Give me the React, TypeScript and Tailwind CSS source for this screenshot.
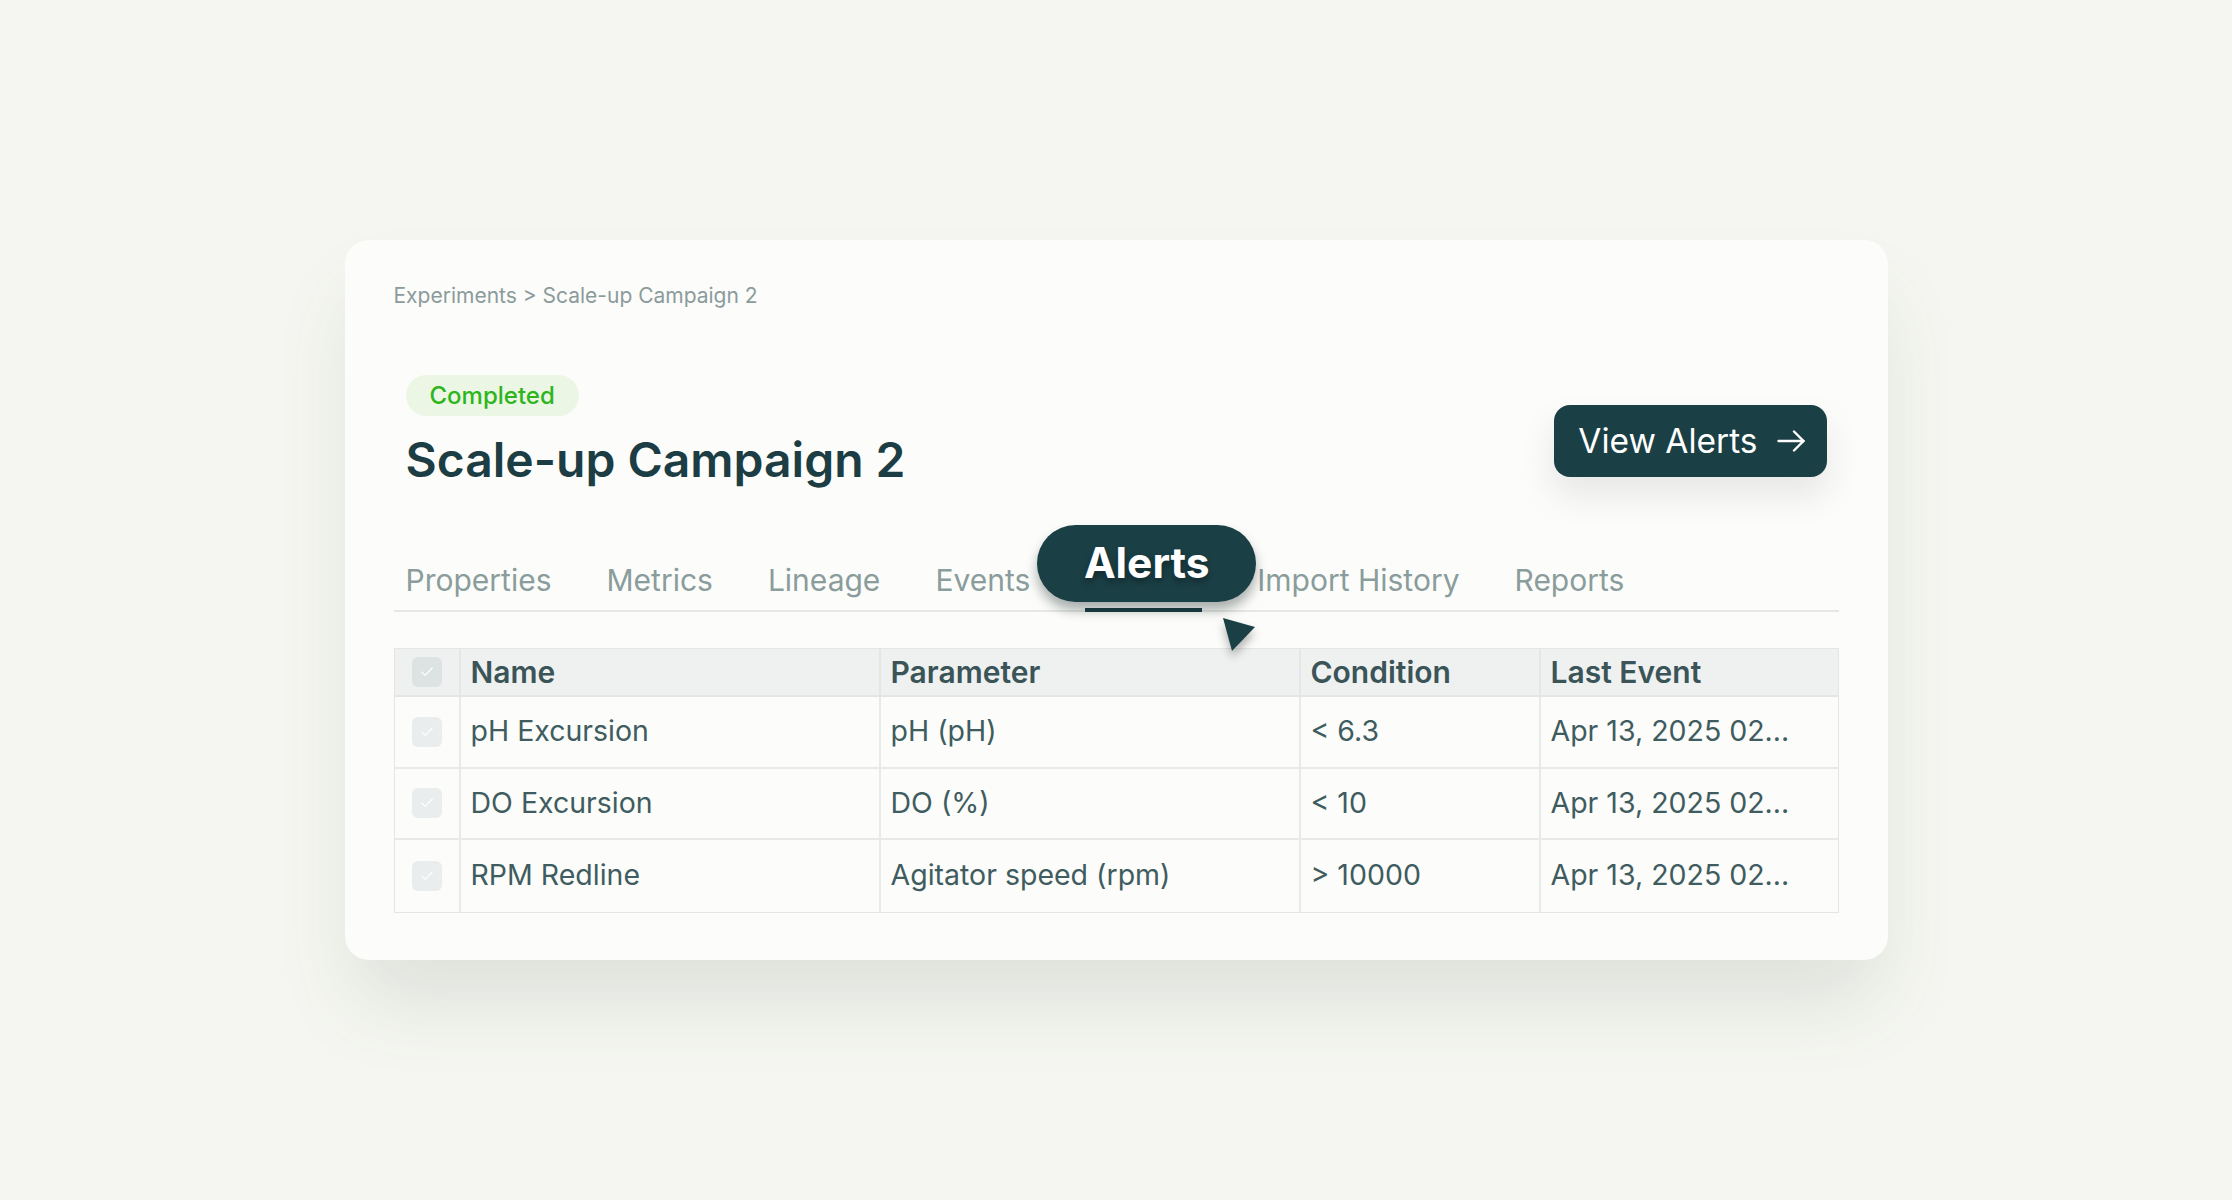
import { Check } from 'lucide-react';

const tabs = ['Properties', 'Metrics', 'Lineage', 'Events', 'Alerts', 'Import History', 'Reports'];

const rows = [
  { name: 'pH Excursion', parameter: 'pH (pH)', condition: '< 6.3', lastEvent: 'Apr 13, 2025 02...' },
  { name: 'DO Excursion', parameter: 'DO (%)', condition: '< 10', lastEvent: 'Apr 13, 2025 02...' },
  { name: 'RPM Redline', parameter: 'Agitator speed (rpm)', condition: '> 10000', lastEvent: 'Apr 13, 2025 02...' },
];

function Checkbox({ header }: { header?: boolean }) {
  return (
    <div
      className={`w-[30px] h-[30px] rounded-[6px] flex items-center justify-center ${
        header ? 'bg-[#dde3e3]' : 'bg-[#eaeded]'
      }`}
    >
      <Check className="w-[16px] h-[16px] text-white" strokeWidth={1.6} />
    </div>
  );
}

export default function App() {
  return (
    <div
      className="w-full h-[1200px] bg-[#f5f6f1] flex items-center justify-center"
      style={{ fontFamily: 'Inter, "Noto Sans", sans-serif' }}
    >
      <div className="w-[1543px] h-[720px] rounded-[24px] bg-[#fcfcfa] px-[49px] pt-[44px] shadow-[0_50px_80px_-10px_rgba(80,100,80,0.14)]">
        <div className="text-[21px] leading-[24px] text-[#8b9b9c]">Experiments &gt; Scale-up Campaign 2</div>

        <div className="mt-[67px] px-[12px] flex items-end justify-between">
          <div>
            <span className="inline-flex items-center h-[41px] px-[24px] rounded-full bg-[#ebf6e4] text-[#2fb51c] text-[24px] font-medium">
              Completed
            </span>
            <h1 className="mt-[15px] text-[48px] leading-[58px] font-semibold text-[#1b3d43]">Scale-up Campaign 2</h1>
          </div>
          <button className="mb-[12px] h-[72px] pl-[24px] pr-[22px] rounded-[16px] bg-[#1a3f45] text-white text-[33.5px] flex items-center gap-[19px] shadow-[0_18px_34px_rgba(40,50,60,0.10)]">
            View Alerts
            <svg className="w-[28px] h-[22px]" viewBox="0 0 28 22" fill="none" stroke="currentColor" strokeWidth={2.4} strokeLinecap="round" strokeLinejoin="round">
              <path d="M1.5 11h25" />
              <path d="M17 1.5l9.5 9.5-9.5 9.5" />
            </svg>
          </button>
        </div>

        <div className="mt-[74px] border-b-2 border-[#e6e8e5] pl-[12px] flex gap-[55px]">
          {tabs.map((tab) =>
            tab === 'Alerts' ? (
              <div key={tab} className="relative w-[117px] pb-[13px]">
                <span className="invisible text-[30px] leading-[34px]">{tab}</span>
                <div className="absolute -bottom-[2px] left-0 right-0 h-[4px] bg-[#1a3f45]" />
                <div className="absolute left-[-48px] top-[-38px] w-[219px] h-[77px] rounded-full bg-[#1a3f45] flex items-center justify-center shadow-[0_8px_12px_rgba(10,30,30,0.35)]">
                  <span className="text-white text-[42.5px] font-bold leading-none [text-shadow:0_4px_6px_rgba(0,0,0,0.35)]">
                    Alerts
                  </span>
                </div>
                <svg
                  className="absolute left-[132px] top-[49px] w-[46px] h-[46px] drop-shadow-[0_6px_5px_rgba(0,0,0,0.3)]"
                  viewBox="0 0 46 46"
                >
                  <polygon points="6,6 38,15 15,39" fill="#1a3f45" />
                </svg>
              </div>
            ) : (
              <div key={tab} className="pb-[13px] text-[30px] leading-[34px] text-[#8a9c9c]">
                {tab}
              </div>
            )
          )}
        </div>

        <div className="mt-[36px] border border-[#e3e6e4]">
          <div className="grid grid-cols-[64px_420px_420px_240px_1fr] h-[48px] bg-[#eff1f0] border-b-2 border-[#e3e6e4] text-[30px] font-semibold text-[#3a5458]">
            <div className="flex items-center justify-center">
              <Checkbox header />
            </div>
            <div className="border-l-2 border-[#e3e6e4] pl-[10px] flex items-center">Name</div>
            <div className="border-l-2 border-[#e3e6e4] pl-[10px] flex items-center">Parameter</div>
            <div className="border-l-2 border-[#e3e6e4] pl-[10px] flex items-center">Condition</div>
            <div className="border-l-2 border-[#e3e6e4] pl-[10px] flex items-center">Last Event</div>
          </div>
          {rows.map((row, i) => (
            <div
              key={row.name}
              className={`grid grid-cols-[64px_420px_420px_240px_1fr] h-[71.5px] text-[28.5px] text-[#3f5c60] ${
                i < rows.length - 1 ? 'border-b-2 border-[#e8eae8]' : ''
              }`}
            >
              <div className="flex items-center justify-center">
                <Checkbox />
              </div>
              <div className="border-l-2 border-[#e8eae8] pl-[10px] flex items-center">{row.name}</div>
              <div className="border-l-2 border-[#e8eae8] pl-[10px] flex items-center">{row.parameter}</div>
              <div className="border-l-2 border-[#e8eae8] pl-[10px] flex items-center">{row.condition}</div>
              <div className="border-l-2 border-[#e8eae8] pl-[10px] flex items-center">{row.lastEvent}</div>
            </div>
          ))}
        </div>
      </div>
    </div>
  );
}
